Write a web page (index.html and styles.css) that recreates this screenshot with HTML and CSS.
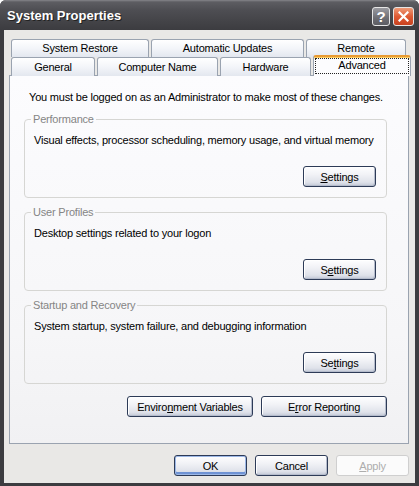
FILE: index.html
```
<!DOCTYPE html>
<html>
<head>
<meta charset="utf-8">
<title>System Properties</title>
<link rel="stylesheet" href="styles.css">
</head>
<body>
<div class="window">
  <div class="titlebar">
    <span class="title">System Properties</span>
    <div class="caption-btns">
      <span class="cbtn help">?</span>
      <span class="cbtn close"><svg width="11" height="11" viewBox="0 0 11 11"><path d="M1.5 1.5 L9.5 9.5 M9.5 1.5 L1.5 9.5" stroke="#fff" stroke-width="2.2" stroke-linecap="square"/></svg></span>
    </div>
  </div>
  <div class="client">
    <div class="tabs">
      <div class="tabrow">
        <div class="tab w-restore">System Restore</div>
        <div class="tab w-updates">Automatic Updates</div>
        <div class="tab w-remote">Remote</div>
      </div>
      <div class="tabrow front">
        <div class="tab w-general">General</div>
        <div class="tab w-name">Computer Name</div>
        <div class="tab w-hardware">Hardware</div>
        <div class="tab w-advanced selected"><span class="focus">Advanced</span></div>
      </div>
    </div>
    <div class="panel">
      <p class="intro">You must be logged on as an Administrator to make most of these changes.</p>
      <fieldset class="group">
        <legend>Performance</legend>
        <p class="desc">Visual effects, processor scheduling, memory usage, and virtual memory</p>
        <div class="btnrow"><button class="btn settings"><u>S</u>ettings</button></div>
      </fieldset>
      <fieldset class="group">
        <legend>User Profiles</legend>
        <p class="desc">Desktop settings related to your logon</p>
        <div class="btnrow"><button class="btn settings">S<u>e</u>ttings</button></div>
      </fieldset>
      <fieldset class="group">
        <legend>Startup and Recovery</legend>
        <p class="desc">System startup, system failure, and debugging information</p>
        <div class="btnrow"><button class="btn settings">Se<u>t</u>tings</button></div>
      </fieldset>
      <div class="extra-btns">
        <button class="btn wide">Enviro<u>n</u>ment Variables</button>
        <button class="btn wide">E<u>r</u>ror Reporting</button>
      </div>
    </div>
    <div class="dlg-btns">
      <button class="btn dlg default">OK</button>
      <button class="btn dlg">Cancel</button>
      <button class="btn dlg disabled"><u>A</u>pply</button>
    </div>
  </div>
</div>
</body>
</html>
```
FILE: styles.css
```
html, body {
  margin: 0;
  padding: 0;
  background: #ffffff;
}
body {
  font-family: "Liberation Sans", Arial, sans-serif;
  font-size: 11px;
  letter-spacing: -0.2px;
  color: #000;
}
.window {
  width: 419px;
  height: 486px;
  background: #3c3c40;
  border-radius: 6px 6px 0 0;
  display: flex;
  flex-direction: column;
  overflow: hidden;
}
.titlebar {
  height: 30px;
  flex: none;
  display: flex;
  align-items: center;
  justify-content: space-between;
  background: linear-gradient(#85858a 0px, #5d5d62 2px, #4e4e53 10px, #434347 22px, #3c3c40 30px);
  padding: 0 5px 0 7px;
}
.title {
  color: #fff;
  font-weight: bold;
  font-size: 13px;
  letter-spacing: 0;
  text-shadow: 1px 1px 0 #222;
  margin-top: 1px;
}
.caption-btns {
  display: flex;
  gap: 3px;
  margin-top: 3px;
}
.cbtn {
  height: 17px;
  border: 1px solid #e6e6e6;
  border-radius: 3px;
  display: flex;
  align-items: center;
  justify-content: center;
  box-sizing: content-box;
}
.help {
  width: 16px;
  background: linear-gradient(#9a9aa0, #6d6d73 60%, #5d5d63);
  color: #fff;
  font-weight: bold;
  font-size: 15px;
  letter-spacing: 0;
}
.close {
  width: 19px;
  background: linear-gradient(#ee9a78, #de5a34 50%, #c8421f);
}
.client {
  flex: 1;
  margin: 0 4px 3px 4px;
  background: #e9e8e6;
  padding: 9px 6px 0 5px;
}
.tabs {
  display: flex;
  flex-direction: column;
}
.tabrow {
  display: flex;
  gap: 2px;
  height: 18px;
  padding-left: 2px;
  align-items: flex-start;
}
.tab {
  height: 18px;
  box-sizing: border-box;
  border: 1px solid #9aa3b0;
  border-bottom: none;
  border-radius: 3px 3px 0 0;
  background: linear-gradient(#ffffff, #f3f5f9 50%, #e3e7ef);
  text-align: center;
  line-height: 17px;
  flex: none;
  white-space: nowrap;
}
.front .tab {
  height: 19px;
  line-height: 19px;
}
.w-restore { width: 138px; }
.w-updates { width: 153px; }
.w-remote { width: 100px; }
.w-general { width: 84px; }
.w-name { width: 121px; }
.w-hardware { width: 91px; }
.w-advanced { width: 98px; }
.front .tab.selected {
  position: relative;
  z-index: 2;
  margin: -2px 0 0 0;
  height: 21px;
  background: #fcfcfe;
  border-top: 2px solid #e89a32;
  box-shadow: inset 0 1px 0 #ffcf62;
  padding: 1px 1px 0 1px;
  line-height: 14px;
}
.focus {
  display: block;
  height: 16px;
  box-sizing: border-box;
  border: 1px dotted #222;
  line-height: 13px;
}
.panel {
  border: 1px solid #9aa3b0;
  background: linear-gradient(#fcfcfe, #f6f6f8 70%, #f1f1f3);
  padding: 14px 21px 26px 14px;
}
.intro {
  margin: 0 0 8px 0;
  padding-left: 5px;
  line-height: 14px;
  white-space: nowrap;
}
.group {
  margin: 0 0 7px 0;
  padding: 0 10px 10px 9px;
  border: 1px solid #d6d6d3;
  border-radius: 4px;
  min-width: 0;
}
.group legend {
  color: #858585;
  padding: 0 2px;
  margin-left: -3px;
  line-height: 14px;
}
.desc {
  margin: 7px 0 0 0;
  line-height: 14px;
  white-space: nowrap;
}
.btnrow {
  display: flex;
  justify-content: flex-end;
  margin-top: 19px;
}
.btn {
  font-family: "Liberation Sans", Arial, sans-serif;
  font-size: 11px;
  letter-spacing: -0.2px;
  color: #000;
  height: 21px;
  box-sizing: border-box;
  border: 1px solid #2d3b57;
  border-radius: 3px;
  background: linear-gradient(#fefeff 0%, #f1f2f6 40%, #dfe2ea 80%, #c2c8d6 100%);
  box-shadow: inset -1px -1px 0 #b5bccc, inset 1px 1px 0 #ffffff;
  padding: 0;
  margin: 0;
  line-height: 18px;
}
.btn u {
  text-decoration: underline;
  text-underline-offset: 1px;
}
.settings {
  width: 73px;
}
.extra-btns {
  display: flex;
  justify-content: flex-end;
  gap: 8px;
  margin-top: 12px;
}
.wide {
  width: 126px;
}
.dlg-btns {
  display: flex;
  justify-content: flex-end;
  gap: 8px;
  margin-top: 11px;
}
.dlg {
  width: 73px;
}
.default {
  box-shadow: inset 0 0 0 1px #9db8e6, inset 0 -2px 0 1px #6f93d4;
}
.disabled {
  color: #adadad;
  border-color: #cfcfcf;
  background: #fbfbfb;
  box-shadow: none;
}
```
